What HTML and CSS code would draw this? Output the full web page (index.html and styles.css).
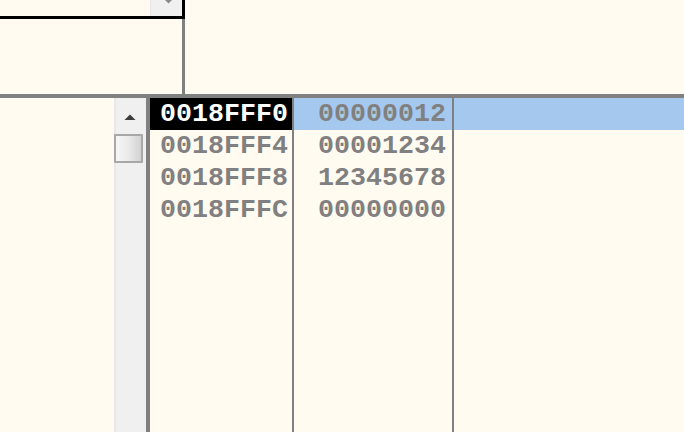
FILE: index.html
```html
<!DOCTYPE html>
<html>
<head>
<meta charset="utf-8">
<link rel="stylesheet" href="styles.css">
</head>
<body>
<div class="screen">
  <div class="top">
    <div class="top-left">
      <div class="box">
        <div class="box-fill"></div>
        <div class="box-scroll">
          <svg class="down-arrow" width="9" height="4" viewBox="0 0 9 4"><polygon points="1,0 8,0 4.5,3.5" fill="#8a8a8a"/></svg>
        </div>
      </div>
    </div>
    <div class="top-right"></div>
  </div>
  <div class="hline"></div>
  <div class="bottom">
    <div class="left-pad"></div>
    <div class="vscroll">
      <div class="arrow-btn">
        <svg width="12" height="6" viewBox="0 0 12 6"><polygon points="0.5,6 11.5,6 6,0.5" fill="#3c3c3c"/></svg>
      </div>
      <div class="thumb"></div>
    </div>
    <div class="vsep"></div>
    <div class="col col-addr">
      <div class="cell sel-addr">0018FFF0</div>
      <div class="cell">0018FFF4</div>
      <div class="cell">0018FFF8</div>
      <div class="cell">0018FFFC</div>
    </div>
    <div class="col col-val">
      <div class="cell sel-val">00000012</div>
      <div class="cell">00001234</div>
      <div class="cell">12345678</div>
      <div class="cell">00000000</div>
    </div>
    <div class="col col-rest">
      <div class="cell sel-val"></div>
    </div>
  </div>
</div>
</body>
</html>
```

FILE: styles.css
```css
html, body {
  margin: 0;
  padding: 0;
  background: #fffbf0;
}
.screen {
  width: 684px;
  height: 432px;
  overflow: hidden;
  display: flex;
  flex-direction: column;
  background: #fffbf0;
}
.top {
  height: 94px;
  display: flex;
}
.top-left {
  width: 182px;
  border-right: 3px solid #808080;
}
.box {
  display: flex;
  height: 16px;
  width: 182px;
  margin-right: -3px;
  border-bottom: 3px solid #000;
  border-right: 3px solid #000;
}
.box-fill {
  flex: 1;
}
.box-scroll {
  width: 31px;
  background: #f0f0f0;
  border-left: 1px solid #e6e6e6;
  position: relative;
}
.down-arrow {
  position: absolute;
  left: 13px;
  top: 0;
}
.top-right {
  flex: 1;
}
.hline {
  height: 4px;
  background: #808080;
}
.bottom {
  flex: 1;
  display: flex;
}
.left-pad {
  width: 114px;
}
.vscroll {
  width: 30px;
  background: #f0f0f0;
  border-left: 2px solid #e8e8e8;
  display: flex;
  flex-direction: column;
}
.arrow-btn {
  height: 36px;
  display: flex;
  align-items: center;
  justify-content: center;
  padding-right: 1px;
  box-sizing: border-box;
}
.arrow-btn svg {
  margin-left: -2px;
  margin-top: 1px;
}
.thumb {
  width: 25px;
  height: 25px;
  margin-left: -2px;
  border: 2px solid #a8a8a8;
  border-radius: 1px;
  background: linear-gradient(to right, #f6f6f6 0%, #ececec 45%, #d2d2d2 100%);
}
.vsep {
  width: 4px;
  background: #808080;
}
.col {
  display: flex;
  flex-direction: column;
}
.col-addr {
  width: 142px;
  border-right: 2px solid #808080;
}
.col-val {
  width: 158px;
  border-right: 2px solid #808080;
}
.col-rest {
  flex: 1;
}
.cell {
  height: 32px;
  line-height: 33px;
  font-family: "Liberation Mono", monospace;
  font-weight: bold;
  font-size: 26.67px;
  color: #808080;
  white-space: nowrap;
  overflow: hidden;
}
.col-addr .cell {
  padding-left: 10px;
}
.col-val .cell {
  text-align: right;
  padding-right: 6px;
}
.sel-addr {
  background: #000;
  color: #fff;
}
.sel-val {
  background: #a5c8ef;
}
```
